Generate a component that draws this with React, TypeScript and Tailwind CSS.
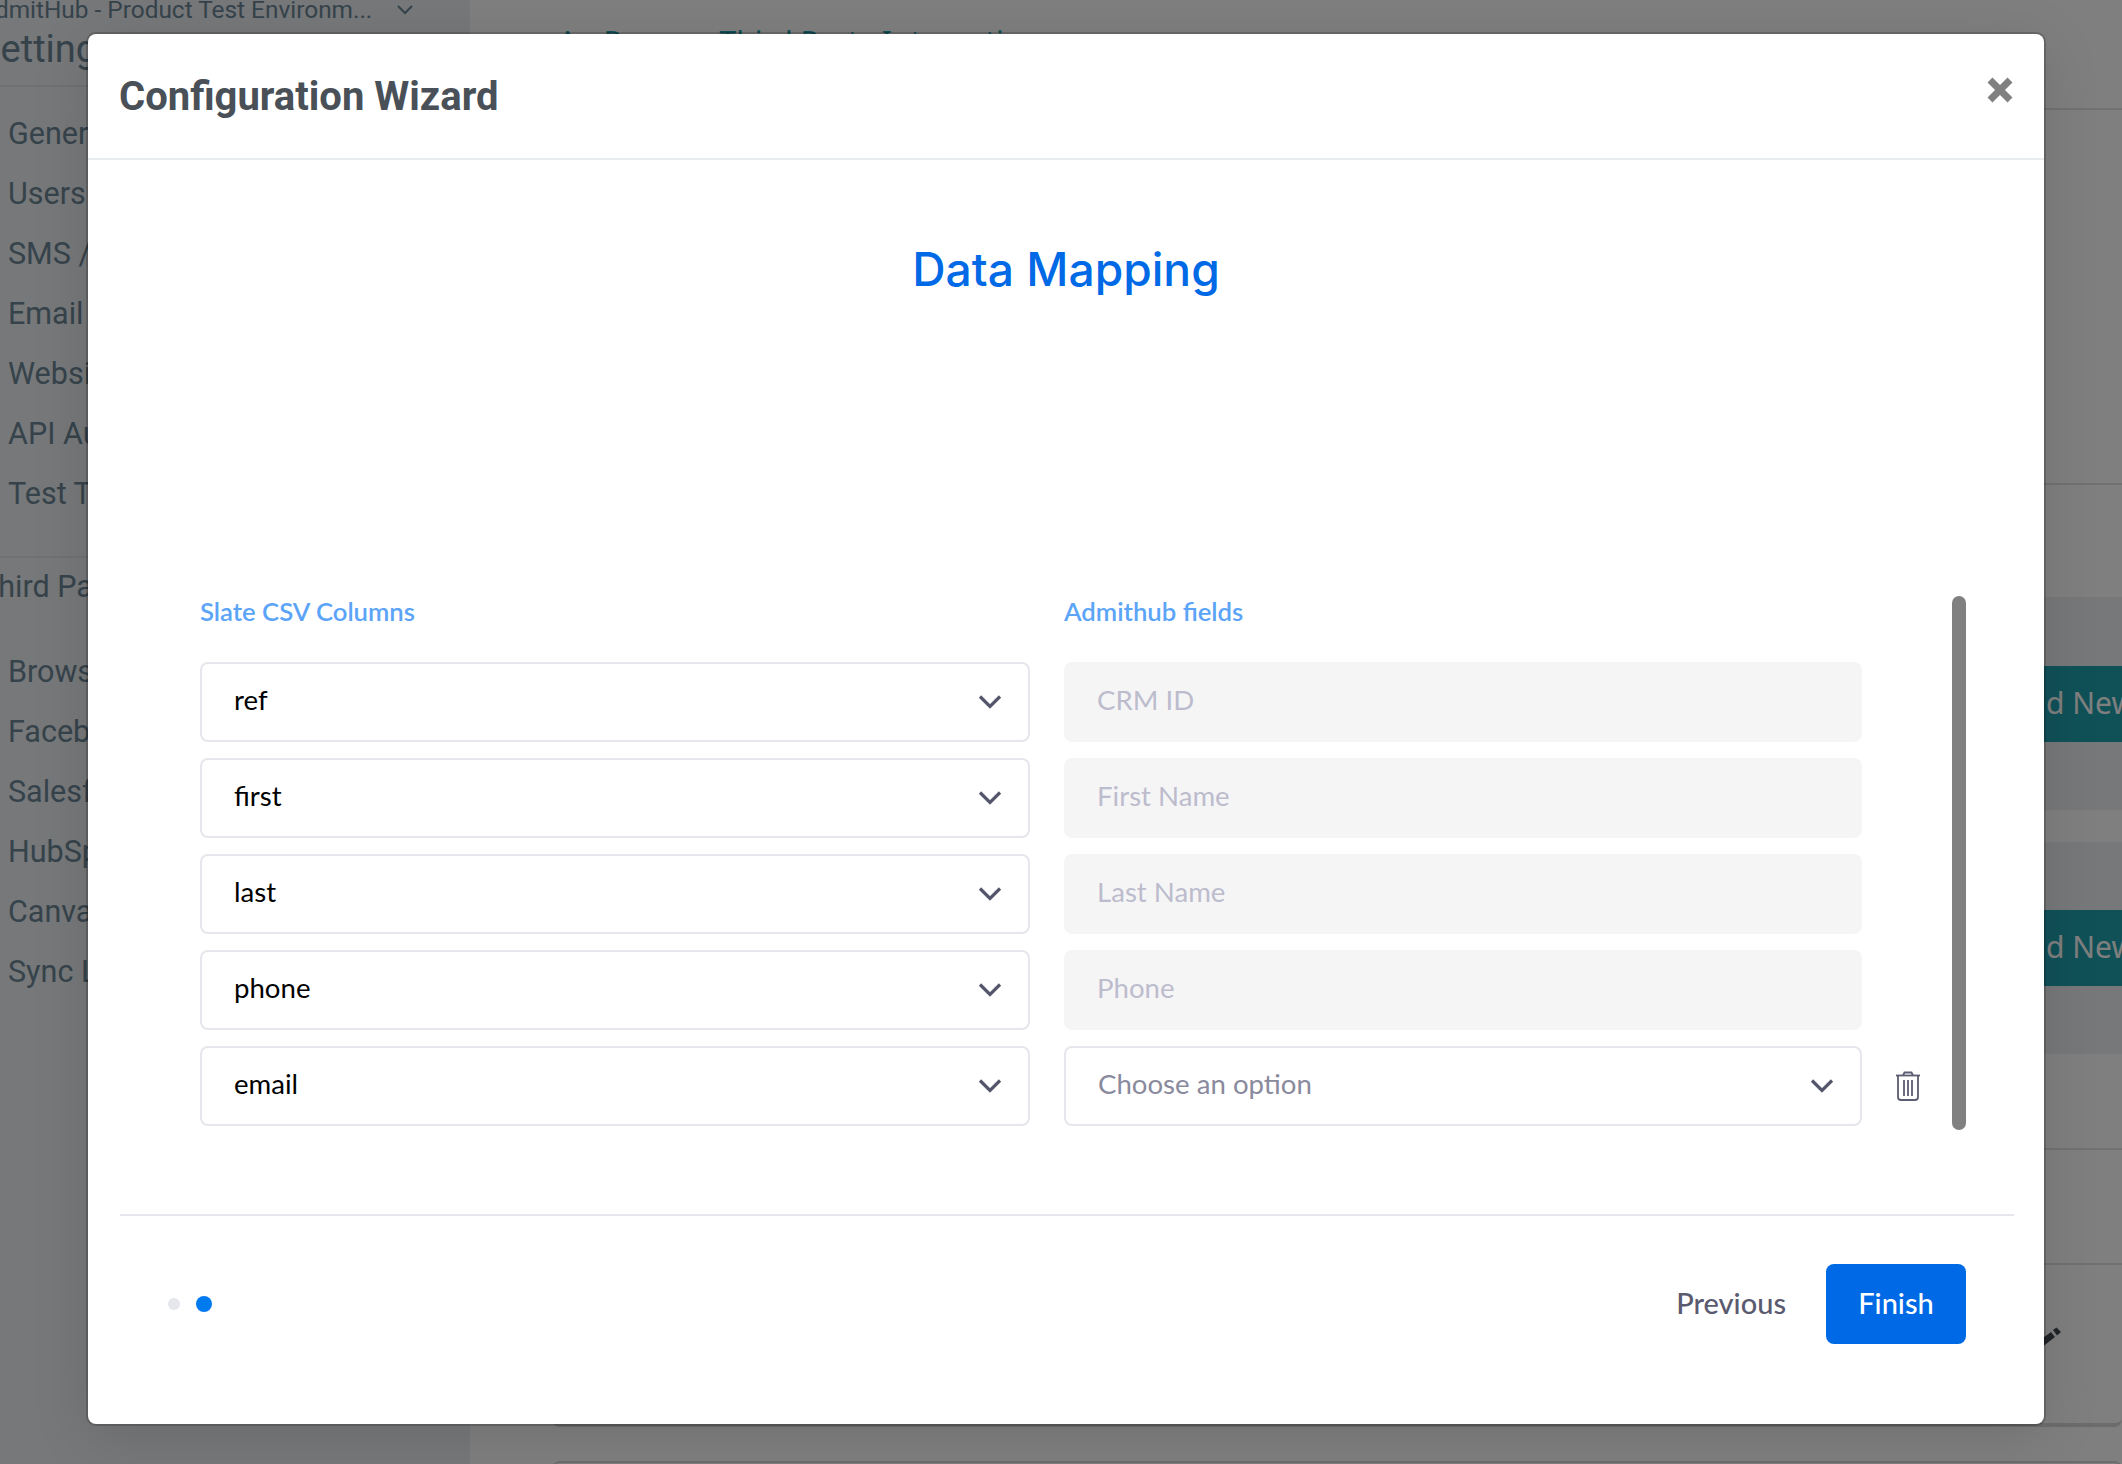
const SIDE_TOP = ["General", "Users", "SMS / Text", "Email", "Website", "API Auth", "Test Tools"]
const SIDE_BOTTOM = ["Browser", "Facebook", "Salesforce", "HubSpot", "Canvas", "Sync Log"]
const ROWS = [
  { column: "ref", field: "CRM ID" },
  { column: "first", field: "First Name" },
  { column: "last", field: "Last Name" },
  { column: "phone", field: "Phone" },
  { column: "email", field: null },
]

function Chevron() {
  return (
    <svg width="24" height="16" viewBox="0 0 24 16" fill="none" className="shrink-0">
      <path d="M2 2.5 L12 12.5 L22 2.5" stroke="#55556b" strokeWidth="3.2" />
    </svg>
  )
}

function Trash() {
  return (
    <svg width="26" height="30" viewBox="0 0 26 30" fill="none" stroke="#5c5c72" strokeWidth="1.8" className="shrink-0">
      <path d="M1 4.5 H25" />
      <path d="M8 4.5 L9.5 1.5 H16.5 L18 4.5" />
      <path d="M3 4.5 V26 Q3 29 6 29 H20 Q23 29 23 26 V4.5" />
      <path d="M9 9 V25 M13 9 V25 M17 9 V25" />
    </svg>
  )
}

function SelectBox({ label, muted = false }: { label: string; muted?: boolean }) {
  return (
    <div className="h-20 flex-1 flex items-center justify-between rounded-lg border-2 border-[#e6e6ed] bg-white pl-8 pr-[26px]">
      <span className={muted ? "pb-[5px] text-[#8a8a9d]" : "pb-[5px] text-black"}>{label}</span>
      <Chevron />
    </div>
  )
}

function Sidebar() {
  return (
    <aside className="w-[470px] shrink-0 overflow-hidden bg-[#eef1f5] font-['Roboto',sans-serif] text-[#6c8796]">
      <div className="flex h-5 items-center whitespace-nowrap text-[24.4px] leading-5 -ml-[21px]">
        <span>AdmitHub - Product Test Environm...</span>
        <svg width="16" height="10" viewBox="0 0 16 10" fill="none" className="ml-[25px]">
          <path d="M1 1 L8 8 L15 1" stroke="#6c8796" strokeWidth="2" />
        </svg>
      </div>
      <div className="h-[67px] border-b-2 border-[#dfe2e5] -ml-[22px] pt-[5px] text-[38px] leading-[48px] whitespace-nowrap">
        Settings
      </div>
      <div className="pt-[17px] pb-[32px] pl-2 border-b-2 border-[#dfe2e5] text-[30.5px] leading-[60px]">
        {SIDE_TOP.map((item) => (
          <div key={item}>{item}</div>
        ))}
      </div>
      <div className="-ml-[20px] pt-[10px] text-[30.5px] leading-[38px] whitespace-nowrap">Third Party</div>
      <div className="pt-9 pl-2 text-[30.5px] leading-[60px]">
        {SIDE_BOTTOM.map((item) => (
          <div key={item}>{item}</div>
        ))}
      </div>
    </aside>
  )
}

function AddNewRow({ height, top }: { height: string; top: string }) {
  return (
    <div className={`flex justify-end bg-[#eff1f3] ${height} ${top}`}>
      <div className="-mr-[41px] flex h-[76px] items-center rounded-md bg-[#20a3b0] px-7 pb-[3px] font-['Noto_Sans',sans-serif] text-[30px] whitespace-nowrap text-white">
        Add New
      </div>
    </div>
  )
}

function Page() {
  return (
    <main className="flex-1 overflow-hidden bg-white pl-[82px]">
      <div className="h-[110px] border-b-2 border-[#dfe2e5] pl-1.5 pt-[20px] font-['Noto_Sans',sans-serif] text-[30px] leading-[44px] whitespace-nowrap text-[#20a3b0]">
        An Process Third Party Integrations
      </div>
      <div className="h-[375px] border-b-2 border-[#dfe2e5]" />
      <div className="h-28" />
      <AddNewRow height="h-[213px]" top="pt-[69px]" />
      <div className="h-8" />
      <AddNewRow height="h-[212px]" top="pt-[68px]" />
      <div className="h-24 border-b-2 border-[#dfe2e5]" />
      <div className="h-[115px] border-b-2 border-[#dfe2e5]" />
      <div className="flex h-[162px] justify-end rounded-b-lg border-b-4 border-[#d4d8db] pr-[60px] pt-[62px]">
        <svg width="30" height="24" viewBox="0 0 30 24" fill="#444a50">
          <path d="M0 23 L0 19 L19 5 L23 10 L5 24 Z" />
          <path d="M21 3 L24.5 0.5 L29 5 L25 8.5 Z" />
        </svg>
      </div>
      <div className="h-[34px]" />
      <div className="h-4 rounded-t-lg border-t-2 border-[#d4d8db]" />
    </main>
  )
}

function Wizard() {
  return (
    <div className="absolute left-[88px] top-[34px] flex h-[1390px] w-[1956px] flex-col rounded-lg bg-white font-['Lato',sans-serif] shadow-[0_0_0_2px_rgba(0,0,0,0.18),0_12px_60px_rgba(0,0,0,0.12)]">
      <div className="flex h-[126px] shrink-0 items-start justify-between border-b-2 border-[#e9ecef] pl-[31px] pr-[30px]">
        <h1 className="pt-[35px] font-['Roboto',sans-serif] text-[40px] font-bold leading-[56px] text-[#495057]">
          Configuration Wizard
        </h1>
        <svg width="28" height="28" viewBox="0 0 28 28" className="mt-[42px]">
          <path d="M4 4 L24 24 M24 4 L4 24" stroke="#808080" strokeWidth="7" />
        </svg>
      </div>

      <h2 className="mt-[79px] h-[60px] text-center font-['Inter',sans-serif] text-[46.2px] font-medium leading-[60px] text-[#0069e6]">
        Data Mapping
      </h2>

      <div className="mt-[297px] flex h-[534px] pl-[112px] pr-[78px]">
        <div className="flex-1 text-[27.6px] leading-none">
          <div className="flex h-8 items-center text-[25.7px] font-semibold text-[#5ba4f7]">
            <div className="w-[830px]">Slate CSV Columns</div>
            <div className="ml-[34px]">Admithub fields</div>
          </div>
          <div className="mt-[34px] flex flex-col gap-4">
            {ROWS.map((row) => (
              <div key={row.column} className="flex h-20 items-center">
                <div className="flex w-[830px]">
                  <SelectBox label={row.column} />
                </div>
                <div className="ml-[34px] flex w-[798px]">
                  {row.field ? (
                    <div className="flex h-20 flex-1 items-center rounded-lg bg-[#f5f5f6] pb-[5px] pl-[33px] text-[#bcbccd]">
                      {row.field}
                    </div>
                  ) : (
                    <SelectBox label="Choose an option" muted />
                  )}
                </div>
                {!row.field && (
                  <div className="ml-[33px]">
                    <Trash />
                  </div>
                )}
              </div>
            ))}
          </div>
        </div>
        <div className="w-3.5 rounded-full bg-[#808080]" />
      </div>

      <div className="ml-8 mr-[30px] mt-[84px] h-0.5 bg-[#e6e6ed]" />

      <div className="ml-20 mr-[78px] mt-12 flex items-center justify-between">
        <div className="flex items-center gap-4">
          <span className="h-3 w-3 rounded-full bg-[#e6e6ed]" />
          <span className="h-4 w-4 rounded-full bg-[#007bef]" />
        </div>
        <div className="flex items-center gap-10 text-[29px] font-medium">
          <span className="pb-[2px] text-[#5a5a70]">Previous</span>
          <span className="flex h-20 w-[140px] items-center justify-center rounded-lg bg-[#0069e6] pb-[2px] text-white">
            Finish
          </span>
        </div>
      </div>
    </div>
  )
}

export default function App() {
  return (
    <div className="relative flex h-[1464px] w-[2122px] overflow-hidden">
      <Sidebar />
      <Page />
      <div className="absolute inset-0 bg-black/50" />
      <Wizard />
    </div>
  )
}
